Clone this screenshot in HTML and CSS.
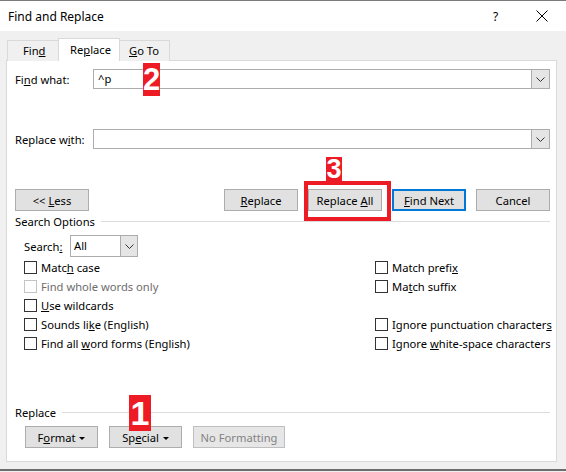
FILE: index.html
```html
<!DOCTYPE html>
<html>
<head>
<meta charset="utf-8">
<link rel="stylesheet" href="styles.css">
</head>
<body>
<div class="window">
  <div class="titlebar">
    <span class="title">Find and Replace</span>
    <span class="help">?</span>
    <svg class="close" width="12" height="12" viewBox="0 0 12 12"><path d="M0.5 0.5 L11.5 11.5 M11.5 0.5 L0.5 11.5" stroke="#000" stroke-width="1" fill="none"/></svg>
  </div>
  <div class="tabs">
    <div class="tab t-find"><span>Fin<u>d</u></span></div>
    <div class="tab active"><span>Re<u>p</u>lace</span></div>
    <div class="tab t-goto"><span><u>G</u>o To</span></div>
  </div>
  <div class="panel">
    <div class="field-row">
      <span class="label">Fi<u>n</u>d what:</span>
      <div class="combo">
        <span class="value">^p</span>
        <span class="drop"><svg width="9" height="5" viewBox="0 0 9 5"><polyline points="0.5,0.5 4.5,4.5 8.5,0.5" fill="none" stroke="#333" stroke-width="1"/></svg></span>
      </div>
    </div>
    <div class="field-row second">
      <span class="label">Replace w<u>i</u>th:</span>
      <div class="combo">
        <span class="value"></span>
        <span class="drop"><svg width="9" height="5" viewBox="0 0 9 5"><polyline points="0.5,0.5 4.5,4.5 8.5,0.5" fill="none" stroke="#333" stroke-width="1"/></svg></span>
      </div>
    </div>
    <div class="button-row">
      <button class="btn less">&lt;&lt; <u>L</u>ess</button>
      <span class="spacer"></span>
      <button class="btn"><u>R</u>eplace</button>
      <button class="btn">Replace <u>A</u>ll</button>
      <button class="btn default"><u>F</u>ind Next</button>
      <button class="btn">Cancel</button>
    </div>
    <div class="group-title"><span>Search Options</span><span class="rule"></span></div>
    <div class="search-row">
      <span class="search-label">Search<u>:</u></span>
      <div class="select">
        <span class="value">All</span>
        <span class="drop"><svg width="9" height="5" viewBox="0 0 9 5"><polyline points="0.5,0.5 4.5,4.5 8.5,0.5" fill="none" stroke="#333" stroke-width="1"/></svg></span>
      </div>
    </div>
    <div class="options">
      <label class="check"><span class="box"></span><span>Matc<u>h</u> case</span></label>
      <label class="check"><span class="box"></span><span>Match prefi<u>x</u></span></label>
      <label class="check disabled"><span class="box"></span><span>Find whole words only</span></label>
      <label class="check"><span class="box"></span><span>Ma<u>t</u>ch suffix</span></label>
      <label class="check"><span class="box"></span><span><u>U</u>se wildcards</span></label>
      <span></span>
      <label class="check"><span class="box"></span><span>Sounds li<u>k</u>e (English)</span></label>
      <label class="check"><span class="box"></span><span>Ignore punctuation character<u>s</u></span></label>
      <label class="check"><span class="box"></span><span>Find all <u>w</u>ord forms (English)</span></label>
      <label class="check"><span class="box"></span><span>Ignore <u>w</u>hite-space characters</span></label>
    </div>
    <div class="group-title replace-title"><span>Replace</span><span class="rule"></span></div>
    <div class="bottom-row">
      <button class="btn small">F<u>o</u>rmat <span class="caret"></span></button>
      <button class="btn small">Sp<u>e</u>cial <span class="caret"></span></button>
      <button class="btn nofmt" disabled>No Formatting</button>
    </div>

    <div class="badge b2">2</div>
    <div class="highlight"></div>
    <div class="badge b3">3</div>
    <div class="badge b1">1</div>
  </div>
  <div class="bottom-edge"></div>
</div>
</body>
</html>
```

FILE: styles.css
```css
* { box-sizing: border-box; }
html, body { margin: 0; padding: 0; }
body {
  background: #f0f0f0;
  font-family: "Noto Sans", "Open Sans", sans-serif;
  font-size: 11.2px;
  color: #000;
}
.window {
  width: 566px;
  height: 472px;
  border-top: 1px solid #7a7a7a;
  background: #f0f0f0;
  position: relative;
  overflow: hidden;
}
.titlebar {
  height: 30px;
  background: #fff;
  display: flex;
  align-items: center;
  padding-left: 8px;
}
.title { font-size: 12px; flex: 1; }
.help { width: 10px; margin-right: 33px; font-size: 12px; }
.close { margin-right: 18px; }

.tabs {
  display: flex;
  align-items: flex-end;
  height: 23px;
  margin-top: 7px;
  padding-left: 7px;
  position: relative;
  z-index: 2;
}
.tab {
  height: 21px;
  border: 1px solid #d9d9d9;
  border-bottom: none;
  background: #f0f0f0;
  line-height: 20px;
  white-space: nowrap;
  padding: 0;
}
.tab + .tab { margin-left: -1px; }
.t-find { width: 52px; padding-left: 15px; }
.tab.active {
  height: 23px;
  background: #fff;
  width: 62px;
  padding-left: 11px;
  line-height: 22px;
}
.t-goto { width: 51px; padding-left: 9px; }

.panel {
  position: relative;
  margin: -1px 9px 0 6px;
  height: 402px;
  background: #fff;
  border: 1px solid #d9d9d9;
  padding: 8px 6px 0 8px;
}
.field-row {
  display: flex;
  align-items: center;
  height: 20px;
}
.field-row.second { margin-top: 40px; }
.label { width: 78px; white-space: nowrap; }
.combo {
  flex: 1;
  height: 20px;
  border: 1px solid #acacac;
  display: flex;
  align-items: stretch;
}
.combo .value { flex: 1; padding-left: 4px; line-height: 18px; }
.drop {
  width: 18px;
  background: #e5e5e5;
  border-left: 1px solid #acacac;
  display: flex;
  align-items: center;
  justify-content: center;
}
.button-row {
  display: flex;
  margin-top: 40px;
  height: 22px;
  gap: 11px;
}
.spacer { flex: 1; }
.btn {
  font: inherit;
  color: #000;
  height: 22px;
  width: 74px;
  background: #e1e1e1;
  border: 1px solid #adadad;
  padding: 0;
  margin: 0;
  white-space: nowrap;
}
.button-row .btn:nth-child(4) { margin-left: -1px; }
.btn.default { border: 2px solid #0078d7; margin-left: -1px; }
.button-row .btn:last-child { margin-left: -1px; }
.group-title {
  display: flex;
  align-items: center;
  margin-top: 2px;
  height: 16px;
}
.group-title .rule {
  flex: 1;
  height: 1px;
  background: #dcdcdc;
  margin-left: 6px;
}
.search-row {
  display: flex;
  align-items: center;
  margin-top: 6px;
  padding-left: 9px;
  height: 22px;
}
.search-label { width: 46px; }
.select {
  width: 68px;
  height: 22px;
  border: 1px solid #acacac;
  display: flex;
}
.select .value { flex: 1; padding-left: 3px; line-height: 20px; }
.select .drop { width: 17px; }
.options {
  display: grid;
  grid-template-columns: 351px auto;
  grid-auto-rows: 19px;
  padding-left: 9px;
  margin-top: 1px;
}
.check {
  display: flex;
  align-items: center;
  white-space: nowrap;
}
.box {
  width: 13px;
  height: 13px;
  border: 1px solid #333;
  background: #fff;
  margin-right: 4px;
  flex: none;
}
.check.disabled { color: #6d6d6d; }
.check.disabled .box { border-color: #c4c4c4; }
.replace-title { margin-top: 51px; }
.bottom-row {
  display: flex;
  margin-top: 6px;
  padding-left: 10px;
  gap: 11px;
}
.btn.small { width: 73px; }
.caret {
  display: inline-block;
  width: 0;
  height: 0;
  border-left: 3px solid transparent;
  border-right: 3px solid transparent;
  border-top: 3px solid #000;
  vertical-align: middle;
  margin-left: 1px;
}
.btn.nofmt {
  width: 92px;
  color: #838383;
  border-color: #bfbfbf;
  background: #e6e6e6;
}
.badge {
  position: absolute;
  background: #ed1c24;
  color: #fff;
  font-family: "Liberation Sans", Arial, sans-serif;
  font-weight: bold;
  display: flex;
  align-items: center;
  justify-content: center;
}
.b2 { left: 136px; top: 2px; width: 17px; height: 33px; font-size: 31px; }
.b3 { left: 319px; top: 96px; width: 16px; height: 24px; font-size: 27px; }
.b1 { left: 122px; top: 334px; width: 22px; height: 36px; font-size: 34px; }
.highlight {
  position: absolute;
  left: 297px;
  top: 120px;
  width: 87px;
  height: 40px;
  border: 4px solid #ed1c24;
}
.bottom-edge {
  position: absolute;
  left: 0;
  right: 0;
  bottom: 1px;
  height: 2px;
  background: #6d6d6d;
}
```
